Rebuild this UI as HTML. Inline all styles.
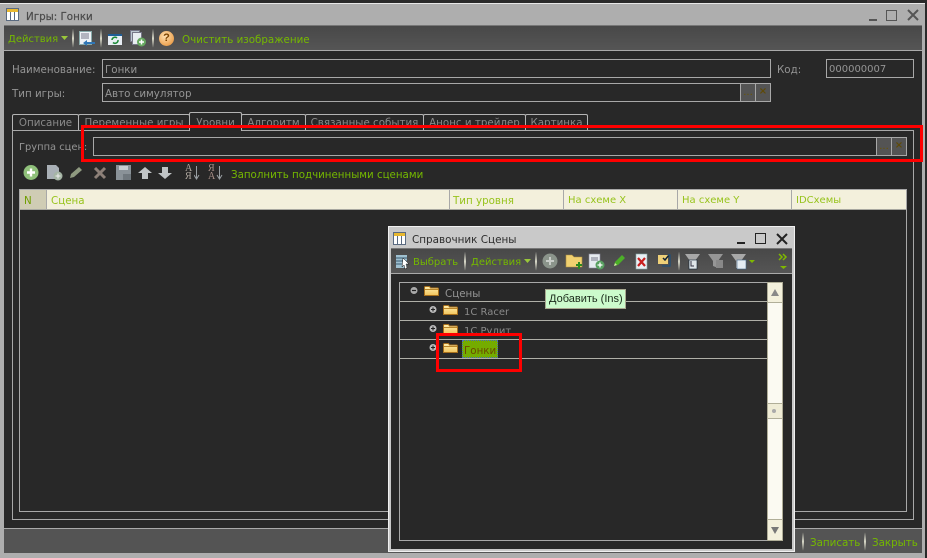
<!DOCTYPE html>
<html><head><meta charset="utf-8"><style>
html,body{margin:0;padding:0}
body{width:927px;height:558px;position:relative;overflow:hidden;background:#2a2a2a;font-family:"DejaVu Sans","Liberation Sans",sans-serif;font-size:10.3px}
div,span,svg{position:absolute;box-sizing:border-box}
.t{white-space:nowrap;line-height:14px;height:14px;margin-top:1px}
.g{color:#75b900}.l{color:#959595}
.n{font-size:10px}
.f{border:1px solid #a8a8a8;background:#282828}
.b{background:#545454;border:1px solid #a8a8a8;color:#6b5500;font-size:10px;text-align:center;line-height:18px}
.x{font-weight:bold;color:#5f4a08;line-height:16px}
.tab{border:1px solid #b4b4b4;border-bottom:0;background:#282828;color:#8a8a8a;text-align:center;line-height:17px;white-space:nowrap;overflow:hidden;border-radius:2px 2px 0 0}
.sep{width:2px;background:linear-gradient(#505050,#d8d8c8,#505050)}
.h{color:#97c31c;top:193px}
.v{background:#a8a8a8;width:1px}
.ln{background:#a8a8a8;height:1px}
</style></head><body>
<svg width="0" height="0" style="left:0;top:0"><defs><linearGradient id="fg" x1="0" y1="0" x2="0" y2="1"><stop offset="0" stop-color="#fff0b0"/><stop offset="1" stop-color="#f2c45c"/></linearGradient></defs></svg>
<div style="left:0;top:0;width:927px;height:3px;background:#2a2a2a"></div>
<div style="left:0;top:3px;width:925px;height:555px;background:#aeaeae;border-top:1px solid #e8e8e8"></div>
<div style="left:4px;top:26px;width:918px;height:527px;background:#282828"></div>
<div style="left:4px;top:25px;width:918px;height:1px;background:#777"></div>
<div style="left:4px;top:26px;width:918px;height:25px;background:linear-gradient(#484848,#555);border-bottom:1px solid #aaa"></div>

<svg style="left:6px;top:8px" width="14" height="14" viewBox="0 0 14 14"><rect x=".5" y=".5" width="12" height="12" fill="#fff" stroke="#5a6a80"/><path d="M4.500 1v11M8.500 1v11" stroke="#5a6a80"/><rect x="1" y="1" width="11" height="3" fill="#e8b830"/></svg>
<div class="t" style="left:26px;top:9px;color:#4a4a4a;font-size:10.300px;-webkit-text-stroke:.2px #4a4a4a">Игры: Гонки</div>
<div style="left:869px;top:19px;width:8px;height:2px;background:#555"></div>
<div style="left:886px;top:10px;width:11px;height:11px;border:1px solid #555"></div>
<svg style="left:907px;top:9px" width="12" height="12"><path d="M1 1l10 10M11 1L1 11" stroke="#555" stroke-width="2"/></svg>

<div class="t g n" style="left:8px;top:32px">Действия</div>
<svg style="left:61px;top:36px" width="7" height="4"><path d="M0 0h7L3.500 4z" fill="#9ac73a"/></svg>
<div class="sep" style="left:72px;top:29px;height:19px"></div>
<svg style="left:79px;top:31px" width="17" height="15"><rect x=".5" y=".5" width="12" height="13" fill="#eef2f6" stroke="#8aa"/><path d="M2 3h8M2 5h8M2 7h8" stroke="#778"/><path d="M16 11H8V9l-4 3 4 3v-2h8z" fill="#2f76b6"/></svg>
<div class="sep" style="left:100px;top:29px;height:19px"></div>
<svg style="left:108px;top:34px" width="14" height="11"><rect width="14" height="11" fill="#e8eef4"/><rect width="14" height="2" fill="#1f5e96"/><path d="M4 6a3 3 0 0 1 5-2M10 6a3 3 0 0 1-5 2.500" fill="none" stroke="#1f8a3a" stroke-width="1.600"/></svg>
<svg style="left:130px;top:30px" width="16" height="17"><rect x=".5" y=".5" width="9" height="11" fill="#bcc8d2" stroke="#778"/><rect x="2.500" y="2.500" width="9" height="12" fill="#e8edf2" stroke="#778"/><circle cx="11.500" cy="12" r="4.500" fill="#66a860"/><path d="M9 12h5M11.500 9.500v5" stroke="#fff" stroke-width="1.500"/></svg>
<div class="sep" style="left:152px;top:29px;height:19px"></div>
<div style="left:159px;top:31px;width:15px;height:15px;border-radius:50%;background:radial-gradient(circle at 40% 35%,#ffe0b0,#e58a2c);color:#7a4200;font:bold 11px/15px 'Liberation Sans';text-align:center">?</div>
<div class="t g" style="left:182px;top:32px">Очистить изображение</div>

<div class="t l" style="left:12px;top:62px">Наименование:</div>
<div class="f" style="left:102px;top:59px;width:669px;height:19px"></div>
<div class="t l" style="left:105px;top:62px">Гонки</div>
<div class="t l" style="left:777px;top:62px">Код:</div>
<div class="f" style="left:826px;top:59px;width:88px;height:19px"></div>
<div class="t l" style="left:829px;top:62px;font-size:10px">000000007</div>
<div class="t l" style="left:12px;top:86px">Тип игры:</div>
<div class="f" style="left:102px;top:83px;width:669px;height:19px"></div>
<div class="t l" style="left:105px;top:86px">Авто симулятор</div>
<div class="b" style="left:740px;top:83px;width:16px;height:19px">...</div>
<div class="b x" style="left:755px;top:83px;width:16px;height:19px">×</div>

<div class="f" style="left:12px;top:130px;width:902px;height:390px"></div>
<div class="tab" style="left:12px;top:114px;width:67px;height:16px">Описание</div>
<div class="tab" style="left:78px;top:114px;width:112px;height:16px">Переменные игры</div>
<div class="tab" style="left:189px;top:112px;width:53px;height:19px;line-height:20px">Уровни</div>
<div class="tab" style="left:241px;top:114px;width:65px;height:16px">Алгоритм</div>
<div class="tab" style="left:305px;top:114px;width:119px;height:16px">Связанные события</div>
<div class="tab" style="left:423px;top:114px;width:103px;height:16px">Анонс и трейлер</div>
<div class="tab" style="left:525px;top:114px;width:63px;height:16px">Картинка</div>

<div class="t l" style="left:19px;top:140px;font-size:9.900px">Группа сцен:</div>
<div class="f" style="left:93px;top:137px;width:814px;height:19px"></div>
<div class="b" style="left:876px;top:137px;width:16px;height:19px">...</div>
<div class="b x" style="left:891px;top:137px;width:16px;height:19px">×</div>

<svg style="left:22px;top:164px" width="160" height="18">
<circle cx="9" cy="8.500" r="7.500" fill="#8fc07a"/><path d="M5 8.500h8M9 4.500v8" stroke="#fff" stroke-width="2.400"/>
<path d="M25 1h9l3 3v11H25z" fill="#a9b0b6"/><circle cx="36" cy="12" r="4.500" fill="#a5b5a5"/><path d="M33.500 12h5M36 9.500v5" stroke="#eee"/>
<path d="M48 14l1-4 8-7 3 3-8 7z" fill="#8f9a80"/>
<path d="M73 4l10 10M83 4L73 14" stroke="#8d8078" stroke-width="3"/>
<rect x="94" y="1" width="15" height="15" fill="#8a9298"/><rect x="97" y="2" width="9" height="4" fill="#c8ced2"/><rect x="101" y="10" width="8" height="6" fill="#70787e"/>
<path d="M123 3l7 6h-4v6h-6V9h-4z" fill="#c0c4c6"/>
<path d="M143 15l7-6h-4V3h-6v6h-4z" fill="#c0c4c6"/></svg>
<div style="left:185px;top:165px;color:#b0a8a0;font:10px/8px 'Liberation Serif';width:10px;white-space:pre-line">А
Я</div>
<div style="left:208px;top:165px;color:#a89088;font:10px/8px 'Liberation Serif';width:10px;white-space:pre-line">Я
А</div>
<svg style="left:194px;top:166px" width="30" height="15"><path d="M2.500 0v12M0 9l2.500 4L5 9M25.500 0v12M23 9l2.500 4L28 9" stroke="#9aa0a4" fill="none"/></svg>
<div class="t g" style="left:231px;top:167px;font-size:10.250px">Заполнить подчиненными сценами</div>

<div class="f" style="left:19px;top:189px;width:888px;height:323px"></div>
<div style="left:20px;top:190px;width:886px;height:20px;background:#f3f0dc;border-bottom:1px solid #a8a8a0"></div>
<div style="left:20px;top:190px;width:26px;height:20px;background:#cfccb4;border-bottom:1px solid #a8a8a0"></div>
<div class="v" style="left:46px;top:190px;height:20px"></div>
<div class="v" style="left:449px;top:190px;height:20px"></div>
<div class="v" style="left:563px;top:190px;height:20px"></div>
<div class="v" style="left:677px;top:190px;height:20px"></div>
<div class="v" style="left:791px;top:190px;height:20px"></div>
<div class="t" style="left:24px;top:193px;color:#6f9e00">N</div>
<div class="t h" style="left:51px">Сцена</div>
<div class="t h" style="left:453px">Тип уровня</div>
<div class="t h n" style="left:568px">На схеме X</div>
<div class="t h n" style="left:682px">На схеме Y</div>
<div class="t h n" style="left:796px">IDСхемы</div>

<div style="left:4px;top:528px;width:918px;height:25px;background:#545454;border-top:1px solid #aaa"></div>
<div class="sep" style="left:802px;top:532px;height:19px"></div>
<div class="sep" style="left:864px;top:532px;height:19px"></div>
<div class="t g" style="left:810px;top:535px">Записать</div>
<div class="t g" style="left:872px;top:535px">Закрыть</div>

<div style="left:388px;top:226px;width:407px;height:326px;background:#c9c9c9;border:1px solid #f0f0f0"></div>
<div style="left:391px;top:248px;width:401px;height:301px;background:#282828"></div>
<div style="left:391px;top:248px;width:401px;height:26px;background:linear-gradient(#484848,#555);border-bottom:1px solid #aaa;border-top:1px solid #777"></div>
<svg style="left:393px;top:232px" width="14" height="14" viewBox="0 0 14 14"><rect x=".5" y=".5" width="12" height="12" fill="#fff" stroke="#5a6a80"/><path d="M4.500 1v11M8.500 1v11" stroke="#5a6a80"/><rect x="1" y="1" width="11" height="3" fill="#e8b830"/></svg>
<div class="t" style="left:412px;top:232px;color:#2c2c2c;font-size:10.400px">Справочник Сцены</div>
<div style="left:737px;top:242px;width:8px;height:2px;background:#222"></div>
<div style="left:755px;top:233px;width:11px;height:11px;border:1px solid #222"></div>
<svg style="left:776px;top:233px" width="12" height="12"><path d="M1 1l10 10M11 1L1 11" stroke="#222" stroke-width="2"/></svg>

<svg style="left:395px;top:254px" width="15" height="16"><rect x="1" y="1" width="11" height="13" fill="#9fc0d0"/><path d="M1 4h11M1 7h11M1 10h11" stroke="#3a5a70"/><path d="M8 4l6 6h-3l1 4-2 1-1-4-2 2z" fill="#fff" stroke="#111" stroke-width=".5"/></svg>
<div class="t g n" style="left:413px;top:255px">Выбрать</div>
<div class="sep" style="left:464px;top:252px;height:19px"></div>
<div class="t g n" style="left:471px;top:255px">Действия</div>
<svg style="left:524px;top:259px" width="7" height="4"><path d="M0 0h7L3.500 4z" fill="#9ac73a"/></svg>
<div class="sep" style="left:535px;top:252px;height:19px"></div>
<svg style="left:541px;top:252px" width="140" height="19">
<circle cx="9" cy="9" r="7.500" fill="#8b948b"/><path d="M5 9h8M9 5v8" stroke="#c8ccc8" stroke-width="2"/>
<path d="M25 3h6l2 2h8v10H25z" fill="#f0d070" stroke="#b09040" stroke-width=".6"/><path d="M35 13h6M38 10v7" stroke="#2a8a20" stroke-width="2"/>
<rect x="48" y="2" width="11" height="14" fill="#e6ebef" stroke="#889" stroke-width=".6"/><path d="M50 6h7M50 8h7" stroke="#778"/><circle cx="59" cy="13" r="4.500" fill="#58a060"/><path d="M56.500 13h5M59 10.500v5" stroke="#fff" stroke-width="1.300"/>
<path d="M73 14l1-4 7-7 3 3-7 7z" fill="#4caf28"/><path d="M73 14l1-3 2 2z" fill="#d0e8a0"/>
<rect x="95" y="2" width="11" height="15" fill="#eaf0f5" stroke="#8aa" stroke-width=".6"/><path d="M97 6l7 8M104 6l-7 8" stroke="#c82020" stroke-width="2.200"/>
<rect x="117" y="3" width="10" height="9" fill="#eed078"/><path d="M122 6l2 2 4-5" stroke="#123" fill="none" stroke-width="1.500"/><path d="M127 3h2v11h-8" stroke="#1f4f7a" fill="none" stroke-width="1.200"/></svg>
<div class="sep" style="left:678px;top:252px;height:19px"></div>
<svg style="left:685px;top:252px" width="76" height="19">
<path d="M0 2h15l-5 7v7H5V9z" fill="#a8a8a8"/><rect x="4" y="8" width="8" height="9" fill="#dfe6ea" stroke="#123" stroke-width=".6"/><path d="M6 9v5h3" stroke="#334" fill="none"/>
<path d="M23 2h15l-5 7v7l-5-2V9z" fill="#969696"/><rect x="31" y="8" width="7" height="8" fill="#888"/>
<path d="M46 2h15l-5 7v7h-5V9z" fill="#a8a8a8"/><rect x="52" y="8" width="9" height="9" fill="#e4ecf2" stroke="#468" stroke-width=".6"/>
<path d="M64 8h6l-3 3z" fill="#7fb800"/></svg>
<svg style="left:778px;top:252px" width="12" height="18"><path d="M1 2l3 3-3 3M5 2l3 3-3 3" stroke="#7fb800" fill="none" stroke-width="1.500"/><path d="M2 14h7l-3.500 3z" fill="#7fb800"/></svg>

<div style="left:399px;top:282px;width:368px;height:259px;border:1px solid #a8a8a8;border-right:0"></div>
<div class="ln" style="left:400px;top:301px;width:367px;background:#b0b0a8"></div>
<div class="ln" style="left:400px;top:320px;width:367px;background:#b0b0a8"></div>
<div class="ln" style="left:400px;top:339px;width:367px;background:#b0b0a8"></div>
<div class="ln" style="left:400px;top:358px;width:367px;background:#b0b0a8"></div>
<div style="left:767px;top:282px;width:16px;height:259px;background:#fbfaf2;border:1px solid #b0ae98"></div>
<div style="left:768px;top:283px;width:14px;height:20px;background:#f3f0dc;border-bottom:1px solid #b0ae98"></div>
<svg style="left:771px;top:289px" width="8" height="7"><path d="M4 0l4 7H0z" fill="#888"/></svg>
<div style="left:768px;top:403px;width:14px;height:16px;background:#efecd6;border-top:1px solid #b0ae98;border-bottom:1px solid #b0ae98"></div>
<div style="left:772px;top:409px;width:4px;height:4px;border-radius:50%;background:#aaa"></div>
<div style="left:768px;top:519px;width:14px;height:21px;background:#f3f0dc;border-top:1px solid #b0ae98"></div>
<svg style="left:771px;top:527px" width="8" height="7"><path d="M0 0h8L4 7z" fill="#777"/></svg>

<svg style="left:409px;top:285px" width="100" height="72">
<circle cx="5" cy="5.500" r="3.500" fill="#aaa"/><path d="M3 5.500h4" stroke="#222" stroke-width="1.200"/>
<g fill="url(#fg)" stroke="#a8701c" stroke-width="1"><path d="M15.500 10.500v-8q0-1 1-1h4l1 1.500h7q1 0 1 1v6.500z"/>
<path d="M34.500 29.500v-8q0-1 1-1h4l1 1.500h7q1 0 1 1v6.500z"/><path d="M34.500 48.500v-8q0-1 1-1h4l1 1.500h7q1 0 1 1v6.500z"/><path d="M34.500 67.500v-8q0-1 1-1h4l1 1.500h7q1 0 1 1v6.500z"/></g>
<path d="M16 4.500h13M35 23.500h13M35 42.500h13M35 61.500h13" stroke="#b88428"/>
<g fill="#bbb"><circle cx="24" cy="24.500" r="3.500"/><circle cx="24" cy="43.500" r="3.500"/><circle cx="24" cy="62.500" r="3.500"/></g>
<path d="M22 24.500h4M24 22.500v4M22 43.500h4M24 41.500v4M22 62.500h4M24 60.500v4" stroke="#222" stroke-width="1.100"/></svg>
<div class="t l" style="left:445px;top:286px">Сцены</div>
<div class="t l n" style="left:464px;top:305px;color:#8a8a8a">1C Racer</div>
<div class="t l n" style="left:464px;top:324px;color:#8a8a8a">1C Рулит</div>
<div style="left:462px;top:340px;width:36px;height:18px;background:#74ac00;outline:1px dotted #4a6ac0;outline-offset:-1px"></div>
<div class="t" style="left:464px;top:343px;color:#6a4a00">Гонки</div>

<div style="left:545px;top:289px;width:81px;height:20px;background:#ccfbcc;border:1px solid #a8a890;color:#1a2a1a;font:11px/19px 'Liberation Sans';padding-left:3px;white-space:nowrap">Добавить (Ins)</div>

<div style="left:81px;top:125px;width:842px;height:37px;border:3px solid #f00"></div>
<div style="left:436px;top:333px;width:86px;height:39px;border:3px solid #f00"></div>
</body></html>
